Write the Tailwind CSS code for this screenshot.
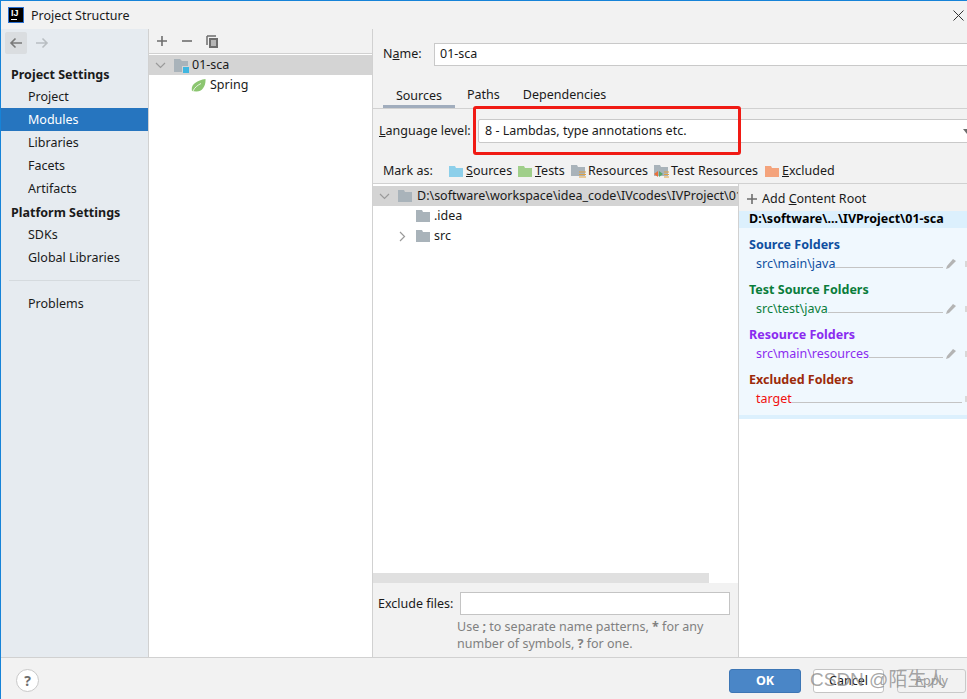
<!DOCTYPE html>
<html lang="en">
<head>
  <meta charset="UTF-8" />
  <title>Project Structure</title>
  <script src="https://cdn.jsdelivr.net/npm/@tailwindcss/browser@4"></script>
</head>
<body class="w-[967px] h-[699px] overflow-hidden bg-[#f2f2f2] text-[12.5px] leading-none text-[#1a1a1a] font-['Noto_Sans','Noto_Sans_CJK_SC',sans-serif]">
<div class="relative w-[967px] h-[699px] flex flex-col border-l border-t border-[#1683d8] overflow-hidden">

  <!-- Title bar -->
  <div class="h-[28px] shrink-0 flex items-center pl-[7px]">
    <div class="w-[16px] h-[16px] bg-black relative shrink-0 mr-[7px] border border-[#2a6fd0]">
      <span class="absolute left-[2px] top-[1px] text-white text-[9px] font-bold font-['Liberation_Sans',sans-serif] leading-[9px]">IJ</span>
      <span class="absolute left-[2px] bottom-[2px] w-[6px] h-[1px] bg-white"></span>
    </div>
    <span class="pt-[2px]">Project Structure</span>
    <svg class="ml-auto mr-[3px]" width="11" height="11" viewBox="0 0 11 11"><path d="M.5.5l10 10M10.500.5l-10 10" stroke="#333" fill="none"/></svg>
  </div>

  <!-- Body -->
  <div class="flex-1 min-h-0 flex">

    <!-- Sidebar -->
    <div class="w-[148px] shrink-0 bg-[#e6ebf0] border-r border-[#d1d1d1] flex flex-col">
      <div class="h-[28px] flex items-center pl-[4px] gap-[8px]">
        <div class="w-[22px] h-[22px] rounded-[2px] bg-[#dadde0] flex items-center justify-center">
          <svg width="14" height="12" viewBox="0 0 14 12"><path d="M13 6H2M6.500 1.500L2 6l4.500 4.500" stroke="#7a7a7a" stroke-width="1.600" fill="none"/></svg>
        </div>
        <svg width="14" height="12" viewBox="0 0 14 12"><path d="M1 6h11M7.500 1.500L12 6l-4.500 4.500" stroke="#b9bec2" stroke-width="1.600" fill="none"/></svg>
      </div>
      <div class="h-[23px] mt-[5px] pt-[4px] flex items-center pl-[10px] font-bold">Project Settings</div>
      <div class="h-[23px] pt-[2px] flex items-center pl-[27px]">Project</div>
      <div class="h-[23px] pt-[2px] flex items-center pl-[27px] bg-[#2675bf] text-white">Modules</div>
      <div class="h-[23px] pt-[2px] flex items-center pl-[27px]">Libraries</div>
      <div class="h-[23px] pt-[2px] flex items-center pl-[27px]">Facets</div>
      <div class="h-[23px] pt-[2px] flex items-center pl-[27px]">Artifacts</div>
      <div class="h-[23px] pt-[4px] flex items-center pl-[10px] font-bold">Platform Settings</div>
      <div class="h-[23px] pt-[2px] flex items-center pl-[27px]">SDKs</div>
      <div class="h-[23px] pt-[2px] flex items-center pl-[27px]">Global Libraries</div>
      <div class="h-px mx-[8px] my-[11px] bg-[#d5dade]"></div>
      <div class="h-[23px] pt-[2px] flex items-center pl-[27px]">Problems</div>
    </div>

    <!-- Module tree -->
    <div class="w-[224px] shrink-0 bg-white border-r border-[#d1d1d1] flex flex-col">
      <div class="h-[25px] bg-[#f2f2f2] border-b border-[#d1d1d1] flex items-center pl-[7px] gap-[12px]">
        <svg width="12" height="12" viewBox="0 0 12 12"><path d="M6 1v10M1 6h10" stroke="#6e6e6e" stroke-width="1.600"/></svg>
        <svg width="14" height="12" viewBox="0 0 14 12"><path d="M2 6h10" stroke="#6e6e6e" stroke-width="1.600"/></svg>
        <svg width="13" height="13" viewBox="0 0 13 13"><path d="M1 1h9M1 1v9" stroke="#6e6e6e" stroke-width="1.500" fill="none"/><path d="M3 3h9v10H3z" fill="#6e6e6e"/><path d="M5 6h5M5 8h5M5 10h5" stroke="#fff"/></svg>
      </div>
      <div class="h-[20px] mt-px bg-[#d4d4d4] flex items-center pl-[6px]">
        <svg class="mr-[8px]" width="11" height="7" viewBox="0 0 11 7"><path d="M1 1l4.500 4.500L10 1" stroke="#9a9a9a" stroke-width="1.200" fill="none"/></svg>
        <div class="relative mr-[4px] flex">
          <svg width="14" height="13" viewBox="0 0 14 13"><path d="M0 0h6l2 2h6v11H0z" fill="#a9b3ba"/></svg>
          <span class="absolute right-[-1px] bottom-[-1px] w-[7px] h-[7px] bg-[#40b6e0] border-l border-t border-[#d4d4d4]"></span>
        </div>
        <span>01-sca</span>
      </div>
      <div class="h-[21px] flex items-center pl-[42px]">
        <svg class="mr-[4px]" width="15" height="13" viewBox="0 0 15 13"><path d="M1 12C-.5 6 5 1.500 14.500 0 15 7 11 13 5 12.500 3.500 12.400 2.500 12 1 12z" fill="#8cc671"/><path d="M2 12C4 8 7 6 10 4.500" stroke="#fff" stroke-width=".8" fill="none"/></svg>
        <span>Spring</span>
      </div>
    </div>

    <!-- Module details -->
    <div class="flex-1 min-w-0 flex flex-col">
      <div class="h-[50px] shrink-0 flex items-center pl-[10px]">
        <span class="w-[51px] shrink-0">N<span class="underline">a</span>me:</span>
        <div class="flex-1 h-[23px] mr-[-2px] bg-white border border-[#c9c9c9] flex items-center pl-[5px]">01-sca</div>
      </div>

      <!-- Tabs -->
      <div class="h-[30px] shrink-0 flex border-b border-[#d1d1d1] pl-[10px]">
        <div class="w-[72px] flex items-center justify-center border-b-[3px] border-[#a1adbd] pt-[8px]">Sources</div>
        <div class="ml-[12px] flex items-center pt-[4px]">Paths</div>
        <div class="ml-[23px] flex items-center pt-[4px]">Dependencies</div>
      </div>

      <div class="h-[44px] shrink-0 flex items-center pl-[6px]">
        <span class="w-[99px] shrink-0"><span class="underline">L</span>anguage level:</span>
        <div class="flex-1 h-[24px] mr-[-2px] mb-[1px] pt-[2px] bg-white border border-[#c9c9c9] rounded-[2px] flex items-center pl-[6px]">
          8 - Lambdas, type annotations etc.
          <svg class="ml-auto mr-[-3px]" width="8" height="5" viewBox="0 0 8 5"><path d="M0 0h8L4 5z" fill="#6e6e6e"/></svg>
        </div>
      </div>

      <!-- Mark as -->
      <div class="h-[31px] shrink-0 flex items-center pl-[10px] pt-[7px] border-b border-[#d1d1d1]">
        <span class="w-[66px] shrink-0">Mark as:</span>
        <svg class="mr-[3px]" width="14" height="11" viewBox="0 0 14 11"><path d="M0 0h6l1 2h7v9H0z" fill="#8ccfea"/></svg>
        <span class="w-[52px] shrink-0"><span class="underline">S</span>ources</span>
        <svg class="mr-[3px]" width="14" height="11" viewBox="0 0 14 11"><path d="M0 0h6l1 2h7v9H0z" fill="#a0cf8a"/></svg>
        <span class="w-[36px] shrink-0"><span class="underline">T</span>ests</span>
        <svg class="mr-[2px]" width="15" height="14" viewBox="0 0 15 14"><path d="M0 0h6l1 2h7v9H0z" fill="#a9b3ba"/><path d="M8 7h7M8 9.500h7M8 12h7" stroke="#e0a040" stroke-width="1.200"/></svg>
        <span class="w-[66px] shrink-0">Resources</span>
        <svg class="mr-[2px]" width="15" height="14" viewBox="0 0 15 14"><path d="M0 0h6l1 2h7v9H0z" fill="#a9b3ba"/><path d="M4 6L0 9l4 3z" fill="#e8703a"/><path d="M5 6l4 3-4 3z" fill="#59a869"/><path d="M10 7h5M10 9.500h5M10 12h5" stroke="#e0a040" stroke-width="1.200"/></svg>
        <span class="w-[94px] shrink-0">Test Resources</span>
        <svg class="mr-[3px]" width="14" height="11" viewBox="0 0 14 11"><path d="M0 0h6l1 2h7v9H0z" fill="#f4a37c"/></svg>
        <span><span class="underline">E</span>xcluded</span>
      </div>

      <div class="flex-1 min-h-0 flex">
        <!-- Content tree -->
        <div class="w-[366px] shrink-0 border-r border-[#d1d1d1] flex flex-col">
          <div class="flex-1 min-h-0 bg-white flex flex-col overflow-hidden">
            <div class="h-[20px] shrink-0 mt-[2px] bg-[#d4d4d4] flex items-center pl-[6px] whitespace-nowrap">
              <svg class="mr-[8px] shrink-0" width="11" height="7" viewBox="0 0 11 7"><path d="M1 1l4.500 4.500L10 1" stroke="#9a9a9a" stroke-width="1.200" fill="none"/></svg>
              <svg class="mr-[5px] shrink-0" width="14" height="12" viewBox="0 0 14 12"><path d="M0 0h6l1 2h7v10H0z" fill="#a9b3ba"/></svg>
              <span>D:\software\workspace\idea_code\IVcodes\IVProject\01-sca</span>
            </div>
            <div class="h-[20px] shrink-0 flex items-center pl-[43px]">
              <svg class="mr-[4px]" width="14" height="12" viewBox="0 0 14 12"><path d="M0 0h6l1 2h7v10H0z" fill="#a9b3ba"/></svg>
              <span>.idea</span>
            </div>
            <div class="h-[20px] shrink-0 flex items-center pl-[26px]">
              <svg class="mr-[10px]" width="7" height="11" viewBox="0 0 7 11"><path d="M1 1l4.500 4.500L1 10" stroke="#9a9a9a" stroke-width="1.200" fill="none"/></svg>
              <svg class="mr-[4px]" width="14" height="12" viewBox="0 0 14 12"><path d="M0 0h6l1 2h7v10H0z" fill="#a9b3ba"/></svg>
              <span>src</span>
            </div>
            <div class="mt-auto h-[10px] w-[336px] bg-[#e0e0e0]"></div>
          </div>
          <div class="h-[74px] shrink-0 bg-[#f2f2f2] pl-[5px] pt-[9px]">
            <div class="flex items-center">
              <span class="w-[82px] shrink-0 pt-[2px]">Exclude files:</span>
              <div class="w-[270px] h-[23px] bg-white border border-[#c4c4c4]"></div>
            </div>
            <div class="ml-[79px] mt-[3px] text-[#808080] leading-[17px]">
              Use <b>;</b> to separate name patterns, <b>*</b> for any<br>number of symbols, <b>?</b> for one.
            </div>
          </div>
        </div>

        <!-- Content roots -->
        <div class="flex-1 min-w-0 flex flex-col bg-white">
          <div class="h-[27px] shrink-0 bg-[#f2f2f2] flex items-center pl-[8px] pt-[3px]">
            <svg class="mr-[5px]" width="10" height="10" viewBox="0 0 10 10"><path d="M5 0v10M0 5h10" stroke="#6e6e6e" stroke-width="1.600"/></svg>
            <span>Add <span class="underline">C</span>ontent Root</span>
          </div>
          <div class="h-[17px] shrink-0 bg-[#dcf0fd] flex items-center pl-[10px] font-bold text-black whitespace-nowrap">D:\software\...\IVProject\01-sca</div>
          <div class="h-[191px] shrink-0 bg-[#f0f8fe] border-b-4 border-[#dcf0fd] pl-[10px] pr-[10px] pt-[8px]">
            <div class="h-[19px] flex items-center font-bold text-[#0f4fa0]">Source Folders</div>
            <div class="h-[15px] mb-[11px] -mr-[10px] flex items-end pl-[7px] text-[#0f4fa0]">
              <span>src\main\java</span><span class="flex-1 mb-[2px] border-b border-[#c4c4c4]"></span>
              <svg class="ml-[3px] mb-[1px]" width="11" height="11" viewBox="0 0 11 11"><path d="M0 11l1-3 6-7 3 2-7 7z" fill="#b4b4b4"/></svg>
              <span class="ml-[8px] mb-[3px] w-[2px] h-[6px] bg-[#d8d8d8]"></span>
            </div>
            <div class="h-[19px] flex items-center font-bold text-[#0a7d3c]">Test Source Folders</div>
            <div class="h-[15px] mb-[11px] -mr-[10px] flex items-end pl-[7px] text-[#0a7d3c]">
              <span>src\test\java</span><span class="flex-1 mb-[2px] border-b border-[#c4c4c4]"></span>
              <svg class="ml-[3px] mb-[1px]" width="11" height="11" viewBox="0 0 11 11"><path d="M0 11l1-3 6-7 3 2-7 7z" fill="#b4b4b4"/></svg>
              <span class="ml-[8px] mb-[3px] w-[2px] h-[6px] bg-[#d8d8d8]"></span>
            </div>
            <div class="h-[19px] flex items-center font-bold text-[#8a2bf0]">Resource Folders</div>
            <div class="h-[15px] mb-[11px] -mr-[10px] flex items-end pl-[7px] text-[#8a2bf0]">
              <span>src\main\resources</span><span class="flex-1 mb-[2px] border-b border-[#c4c4c4]"></span>
              <svg class="ml-[3px] mb-[1px]" width="11" height="11" viewBox="0 0 11 11"><path d="M0 11l1-3 6-7 3 2-7 7z" fill="#b4b4b4"/></svg>
              <span class="ml-[8px] mb-[3px] w-[2px] h-[6px] bg-[#d8d8d8]"></span>
            </div>
            <div class="h-[19px] flex items-center font-bold text-[#9c2b0a]">Excluded Folders</div>
            <div class="h-[15px] -mr-[10px] flex items-end pl-[7px] text-[#f01010]">
              <span>target</span><span class="flex-1 mb-[2px] border-b border-[#c4c4c4]"></span>
              <span class="ml-[3px] mb-[3px] w-[2px] h-[6px] bg-[#d8d8d8]"></span>
            </div>
          </div>
        </div>
      </div>
    </div>
  </div>

  <!-- Footer -->
  <div class="h-[42px] shrink-0 border-t border-[#d1d1d1] bg-[#f2f2f2] flex items-center pl-[15px] pr-[1px] pt-[4px]">
    <div class="w-[23px] h-[23px] rounded-full bg-white border border-[#c9c9c9] flex items-center justify-center font-bold text-[#6e6e6e] text-[14px]">?</div>
    <div class="ml-auto w-[72px] h-[24px] pt-[2px] rounded-[3px] bg-[#4a86c7] border border-[#3d76b5] text-white font-bold flex items-center justify-center">OK</div>
    <div class="ml-[12px] w-[71px] h-[24px] pt-[2px] rounded-[3px] bg-white border border-[#c4c4c4] flex items-center justify-center">Cancel</div>
    <div class="ml-[13px] w-[69px] h-[24px] pt-[2px] rounded-[3px] border border-[#c9c9c9] text-[#9a9a9a] flex items-center justify-center">Apply</div>
  </div>

  <!-- Red annotation rectangle drawn on the screenshot -->
  <div class="absolute left-[472px] top-[105px] w-[268px] h-[49px] border-[3px] border-[#f01a14] rounded-[3px]"></div>

  <!-- Watermark -->
  <div class="absolute left-[809px] top-[667px] text-[19px] leading-[24px] text-[#8f8f8f]/80 whitespace-nowrap font-['Liberation_Sans','Noto_Sans_CJK_SC',sans-serif]">CSDN @陌生人</div>
</div>
</body>
</html>
